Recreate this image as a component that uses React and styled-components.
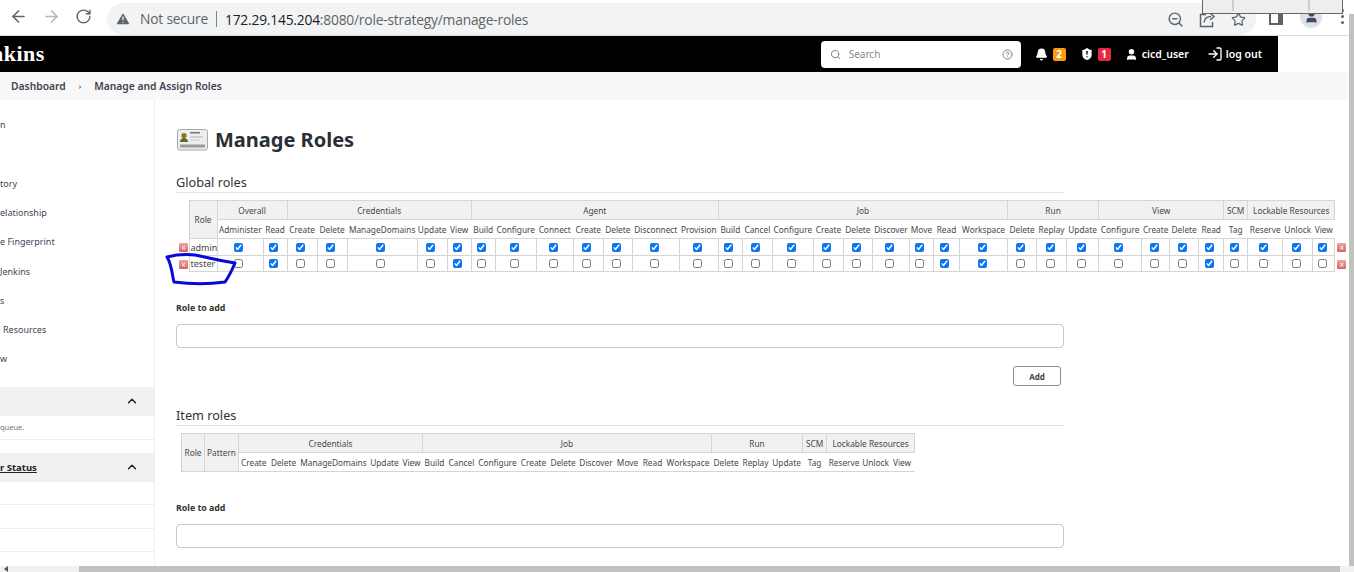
import React from "react";
import styled, { createGlobalStyle } from "styled-components";
import { ArrowLeft, ArrowRight, RotateCw, TriangleAlert, ZoomOut, Star, ChevronUp, Search, CircleHelp, Bell, ShieldAlert, User, LogIn } from "lucide-react";

const GlobalStyle = createGlobalStyle`
  html, body { margin: 0; padding: 0; background: #fff; overflow: hidden; }
  * { box-sizing: border-box; }
  body { font-family: "Noto Sans", "Open Sans", sans-serif; color: #333; }
`;

const Page = styled.div`
  position: relative;
  width: 1354px;
  height: 572px;
  overflow: hidden;
  display: flex;
  flex-direction: column;
`;

/* browser toolbar */
const Toolbar = styled.div`
  height: 36px;
  flex: none;
  display: flex;
  align-items: flex-start;
  background: #fff;
  border-bottom: 1px solid #d9dadc;
`;
const NavIcons = styled.div`
  width: 107px;
  flex: none;
  display: flex;
  gap: 14px;
  padding: 0 0 0 9px;
  height: 33px;
  align-items: center;
  color: #5f6368;
`;
const Pill = styled.div`
  width: 1149px;
  flex: none;
  height: 32px;
  margin-top: 3px;
  border-radius: 16px;
  background: #f1f3f4;
  display: flex;
  align-items: center;
  padding-left: 8px;
  font-family: "Open Sans", sans-serif;
  font-size: 13.8px;
  letter-spacing: -0.2px;
`;
const NotSecure = styled.span`
  color: #5f6368;
  margin-left: 9px;
  padding-right: 8px;
  border-right: 1px solid #80868b;
  line-height: 16px;
`;
const Host = styled.span`
  color: #202124;
  margin-left: 8px;
`;
const Path = styled.span`
  color: #5f6368;
`;
const PillIcons = styled.div`
  margin-left: auto;
  display: flex;
  gap: 15px;
  align-items: center;
  padding-right: 10px;
  color: #5f6368;
`;
const ToolbarRight = styled.div`
  flex: 1;
  display: flex;
  align-items: center;
  height: 33px;
  padding-left: 13px;
  gap: 17px;
`;
const SidePanelIcon = styled.span`
  width: 14px;
  height: 14px;
  border: 2px solid #5f6368;
  border-right-width: 5px;
  margin-top: 3px;
`;
const Avatar = styled.span`
  width: 22px;
  height: 22px;
  border-radius: 50%;
  background: #dfe1e5;
  display: flex;
  align-items: center;
  justify-content: center;
  color: #3c4a62;
`;
const Dots = styled.span`
  display: flex;
  flex-direction: column;
  gap: 3px;
  margin-left: 2px;
  i { width: 3px; height: 3px; border-radius: 50%; background: #5f6368; display: block; }
`;
const Overlay = styled.div`
  position: absolute;
  top: 0;
  left: 1202px;
  width: 141px;
  height: 14px;
  background: #eee;
  border: 1px solid #666;
  border-top: 0;
  display: flex;
  padding-left: 29px;
  gap: 74px;
  i { width: 2px; height: 11px; background: #ccc; display: block; }
`;

/* jenkins header */
const Header = styled.header`
  height: 36px;
  width: 1278px;
  flex: none;
  background: #000;
  color: #fff;
  display: flex;
  align-items: center;
  overflow: hidden;
`;
const Brand = styled.span`
  font-family: "Liberation Serif", serif;
  font-weight: 700;
  font-size: 22px;
  letter-spacing: 0.5px;
  margin-left: -9px;
`;
const SearchBox = styled.div`
  margin-left: auto;
  width: 200px;
  height: 27px;
  border-radius: 4px;
  background: #fff;
  color: #777;
  display: flex;
  align-items: center;
  padding: 0 8px 0 9px;
  font-size: 10px;
  span { margin-left: 8px; flex: 1; color: #888; }
`;
const HeadItem = styled.div`
  display: flex;
  align-items: center;
  gap: ${(p) => p.$inner}px;
  margin-left: ${(p) => p.$gap}px;
  font-size: 10.5px;
  font-weight: 600;
`;
const Badge = styled.span`
  width: 13px;
  height: 13px;
  border-radius: 2px;
  background: ${(p) => p.$bg};
  color: #fff;
  font-size: 10px;
  font-weight: 700;
  line-height: 13px;
  text-align: center;
`;
const HeaderEnd = styled.span`
  width: 16px;
  flex: none;
`;

/* breadcrumb */
const Crumbs = styled.nav`
  height: 28px;
  flex: none;
  background: #f8f8f8;
  display: flex;
  align-items: center;
  padding-left: 11px;
  font-size: 10.3px;
  font-weight: 600;
  color: #3f4450;
  i { font-style: normal; font-size: 7px; margin: 0 13px 0 13px; }
`;

/* body */
const Body = styled.div`
  flex: 1;
  display: flex;
  min-height: 0;
`;
const Side = styled.aside`
  width: 155px;
  flex: none;
  border-right: 1px solid #eee;
  padding-top: 16px;
  overflow: hidden;
  font-size: 9px;
  color: #3d4657;
`;
const SideLink = styled.div`
  height: 29.25px;
  line-height: 18px;
  margin-top: ${(p) => p.$skip || 0}px;
  padding-left: ${(p) => p.$indent || 0}px;
  white-space: pre;
`;
const PanelHead = styled.div`
  height: 29px;
  margin-top: ${(p) => p.$top}px;
  background: #f1f1f1;
  display: flex;
  align-items: center;
  justify-content: space-between;
  padding-right: 15px;
  font-weight: 700;
  font-size: 9.5px;
  color: #222;
  u { text-decoration: underline; }
`;
const PanelNote = styled.div`
  height: 24px;
  border-bottom: 1px solid #eee;
  font-size: 7.5px;
  line-height: 22px;
  color: #777;
`;
const PanelRow = styled.div`
  height: 23.5px;
  border-bottom: 1px solid #eee;
`;

const Main = styled.main`
  flex: 1;
  padding: 29px 0 0 21px;
  min-width: 0;
`;
const TitleRow = styled.div`
  display: flex;
  align-items: center;
  gap: 7px;
  height: 21px;
  margin-left: 1px;
`;
const Title = styled.h1`
  margin: 0;
  font-size: 20px;
  font-weight: 700;
  color: #2a2f36;
  line-height: 21px;
`;
const SectionTitle = styled.h2`
  margin: ${(p) => p.$top}px 0 0;
  width: 888px;
  height: 18px;
  border-bottom: 1px solid #e3e3e3;
  font-size: 12.7px;
  font-weight: 400;
  line-height: 15px;
  color: #333;
`;
const RoleTable = styled.table`
  border-collapse: collapse;
  table-layout: fixed;
  margin: 7px 0 0 ${(p) => p.$left || 0}px;
  font-size: 8.3px;
  color: #484848;
  td, th { padding: 0; text-align: center; font-weight: 400; white-space: nowrap; overflow: hidden; }
`;
const GroupCell = styled.th`
  background: #f1f1f1;
  border: 1px solid #d6d6d0;
  height: 19px;
`;
const SubCell = styled.th`
  height: 19px;
  border-bottom: 1px solid #d6d6d0;
  border-top: 1px solid #d6d6d0;
`;
const BoxCell = styled.td`
  height: ${(p) => p.$h}px;
  border: 1px solid #d6d6d0;
  line-height: 0;
  && { padding-right: 3px; }
`;
const NameCell = styled.td`
  && { text-align: left; padding-left: 1px; }
  border: 1px solid #d6d6d0;
  font-size: 9px;
  height: ${(p) => p.$h}px;
`;
const BareCell = styled.td`
  border: 0;
  line-height: 0;
  && { text-align: left; padding: 1px 0 0 ${(p) => p.$pad || 0}px; }
`;
const Check = styled.input.attrs({ type: "checkbox", readOnly: true })`
  width: 9px;
  height: 9px;
  margin: 0;
  accent-color: #0b76ef;
`;
const Remove = styled.span`
  display: inline-block;
  width: 9px;
  height: 9px;
  border-radius: 1px;
  background: linear-gradient(#eda3a3, #dc6262);
  color: #fff;
  font-size: 8px;
  line-height: 9px;
  text-align: center;
`;
const FieldLabel = styled.div`
  margin-top: ${(p) => p.$top}px;
  height: 12px;
  line-height: 12px;
  font-size: 8.8px;
  font-weight: 700;
  color: #333;
`;
const TextBox = styled.input`
  display: block;
  width: 888px;
  height: 24px;
  margin-top: 10px;
  border: 1px solid #c6ccd2;
  border-radius: 4px;
  background: #fff;
`;
const AddRow = styled.div`
  width: 885px;
  margin-top: 18px;
  display: flex;
  justify-content: flex-end;
`;
const AddButton = styled.button`
  width: 48px;
  height: 20px;
  padding: 0;
  background: #fff;
  border: 1px solid #8d8d8d;
  border-radius: 3px;
  font: 700 8px "Noto Sans", sans-serif;
  color: #444;
`;
const Scribble = styled.svg`
  position: absolute;
  left: 160px;
  top: 250px;
`;
const ScrollX = styled.div`
  position: absolute;
  left: 0;
  right: 0;
  bottom: 0;
  height: 6px;
  background: #f1f1f1;
  padding-left: 79px;
  i { display: block; width: 1261px; height: 6px; background: #c1c1c1; }
`;
const ScrollArrow = styled.b`
  position: absolute;
  left: 4px;
  bottom: 0;
  width: 0;
  height: 0;
  border: 3px solid transparent;
  border-left: 0;
  border-right: 4px solid #555;
`;
const ScrollY = styled.div`
  position: absolute;
  right: 0;
  top: 14px;
  bottom: 6px;
  width: 5px;
  background: #c1c1c1;
`;

const globalGroups = [
  ["Overall", [["Administer", 46], ["Read", 24]]],
  ["Credentials", [["Create", 30], ["Delete", 30], ["ManageDomains", 70], ["Update", 30], ["View", 24]]],
  ["Agent", [["Build", 24], ["Configure", 41], ["Connect", 37], ["Create", 30], ["Delete", 29], ["Disconnect", 47], ["Provision", 39]]],
  ["Job", [["Build", 24], ["Cancel", 30], ["Configure", 41], ["Create", 30], ["Delete", 29], ["Discover", 37], ["Move", 24], ["Read", 26], ["Workspace", 48]]],
  ["Run", [["Delete", 29], ["Replay", 30], ["Update", 32]]],
  ["View", [["Configure", 43], ["Create", 28], ["Delete", 29], ["Read", 25]]],
  ["SCM", [["Tag", 24]]],
  ["Lockable Resources", [["Reserve", 35], ["Unlock", 30], ["View", 22]]],
];

const itemGroups = [
  ["Credentials", [["Create", 30], ["Delete", 30], ["ManageDomains", 70], ["Update", 32], ["View", 22]]],
  ["Job", [["Build", 24], ["Cancel", 30], ["Configure", 42], ["Create", 30], ["Delete", 29], ["Discover", 37], ["Move", 26], ["Read", 24], ["Workspace", 47]]],
  ["Run", [["Delete", 29], ["Replay", 30], ["Update", 32]]],
  ["SCM", [["Tag", 24]]],
  ["Lockable Resources", [["Reserve", 35], ["Unlock", 28], ["View", 25]]],
];

const flat = (groups) => groups.flatMap(([, cols]) => cols);

// ticked columns for the tester role: Overall/Read, Credentials/View, Job/Read, Job/Workspace, View/Read
const testerTicks = [1, 6, 21, 22, 29];

function CardIcon() {
  return (
    <svg width="31" height="22" viewBox="0 0 31 22">
      <rect x="0.5" y="0.5" width="30" height="20.5" rx="2" fill="#eceded" stroke="#aaa" />
      <circle cx="7" cy="6.5" r="2.6" fill="#8a7420" />
      <path d="M3 13c0-3 2-4 4-4s4 1 4 4z" fill="#5d6b1e" />
      <rect x="13" y="3" width="10" height="1.5" fill="#777" />
      <rect x="13" y="7" width="13" height="2" fill="#d0d0d0" />
      <rect x="13" y="10.5" width="10" height="1.5" fill="#d8d8d8" />
      <rect x="3" y="15.5" width="25" height="3" fill="#777" opacity="0.7" />
    </svg>
  );
}

function ShareIcon() {
  return (
    <svg width="17" height="17" viewBox="0 0 17 17" fill="none" stroke="currentColor" strokeWidth="1.5">
      <path d="M7 3.5H1.5v12h12V11" />
      <path d="M5 11.5c.5-4 3-6 7-6M11 2l4 3.5-4 3.5" />
    </svg>
  );
}

function GlobalTable() {
  const cols = flat(globalGroups);
  const rows = [
    { name: "admin", h: 17, ticks: cols.map((_, i) => i) },
    { name: "tester", h: 16, ticks: testerTicks },
  ];
  return (
    <RoleTable style={{ width: 1172 }}>
      <colgroup>
        <col style={{ width: 13 }} />
        <col style={{ width: 28 }} />
        {cols.map(([label, w], i) => <col key={i} style={{ width: w }} />)}
        <col style={{ width: 13 }} />
      </colgroup>
      <thead>
        <tr>
          <BareCell />
          <GroupCell rowSpan={2}>Role</GroupCell>
          {globalGroups.map(([name, sub]) => <GroupCell key={name} colSpan={sub.length}>{name}</GroupCell>)}
          <BareCell />
        </tr>
        <tr>
          <BareCell />
          {cols.map(([label], i) => <SubCell key={i}>{label}</SubCell>)}
          <BareCell />
        </tr>
      </thead>
      <tbody>
        {rows.map((row) => (
          <tr key={row.name}>
            <BareCell $pad={3}><Remove>×</Remove></BareCell>
            <NameCell $h={row.h}>{row.name}</NameCell>
            {cols.map((_, i) => (
              <BoxCell key={i} $h={row.h}><Check defaultChecked={row.ticks.includes(i)} /></BoxCell>
            ))}
            <BareCell $pad={2}><Remove>×</Remove></BareCell>
          </tr>
        ))}
      </tbody>
    </RoleTable>
  );
}

function ItemTable() {
  const cols = flat(itemGroups);
  return (
    <RoleTable $left={5} style={{ width: 734 }}>
      <colgroup>
        <col style={{ width: 23 }} />
        <col style={{ width: 34 }} />
        {cols.map(([label, w], i) => <col key={i} style={{ width: w }} />)}
      </colgroup>
      <thead>
        <tr>
          <GroupCell rowSpan={2}>Role</GroupCell>
          <GroupCell rowSpan={2}>Pattern</GroupCell>
          {itemGroups.map(([name, sub]) => <GroupCell key={name} colSpan={sub.length}>{name}</GroupCell>)}
        </tr>
        <tr>
          {cols.map(([label], i) => <SubCell key={i}>{label}</SubCell>)}
        </tr>
      </thead>
    </RoleTable>
  );
}

export default function App() {
  return (
    <Page>
      <GlobalStyle />
      <Toolbar>
        <NavIcons>
          <ArrowLeft size={19} />
          <ArrowRight size={19} color="#b4b7bb" />
          <RotateCw size={17} />
        </NavIcons>
        <Pill>
          <TriangleAlert size={16} fill="#5f6368" stroke="#f1f3f4" />
          <NotSecure>Not secure</NotSecure>
          <Host>172.29.145.204</Host>
          <Path>:8080/role-strategy/manage-roles</Path>
          <PillIcons>
            <ZoomOut size={17} />
            <ShareIcon />
            <Star size={15} />
          </PillIcons>
        </Pill>
        <ToolbarRight>
          <SidePanelIcon />
          <Avatar><User size={15} fill="#3c4a62" /></Avatar>
          <Dots><i /><i /><i /></Dots>
        </ToolbarRight>
      </Toolbar>
      <Overlay><i /><i /></Overlay>

      <Header>
        <Brand>nkins</Brand>
        <SearchBox>
          <Search size={11} />
          <span>Search</span>
          <CircleHelp size={11} />
        </SearchBox>
        <HeadItem $gap={14} $inner={5}><Bell size={13} fill="#fff" /><Badge $bg="#fe9a07">2</Badge></HeadItem>
        <HeadItem $gap={13} $inner={3}><ShieldAlert size={16} fill="#fff" stroke="#000" /><Badge $bg="#e6293f">1</Badge></HeadItem>
        <HeadItem $gap={14} $inner={4}><User size={13} fill="#fff" />cicd_user</HeadItem>
        <HeadItem $gap={18} $inner={3}><LogIn size={16} />log out</HeadItem>
        <HeaderEnd />
      </Header>

      <Crumbs>Dashboard<i>›</i>Manage and Assign Roles</Crumbs>

      <Body>
        <Side>
          <SideLink>n</SideLink>
          <SideLink $skip={29.5}>tory</SideLink>
          <SideLink>elationship</SideLink>
          <SideLink>e Fingerprint</SideLink>
          <SideLink>Jenkins</SideLink>
          <SideLink>s</SideLink>
          <SideLink $indent={3}>Resources</SideLink>
          <SideLink>w</SideLink>
          <PanelHead $top={7}><span /><ChevronUp size={14} strokeWidth={2.5} /></PanelHead>
          <PanelNote>queue.</PanelNote>
          <PanelHead $top={13}><u>r Status</u><ChevronUp size={14} strokeWidth={2.5} /></PanelHead>
          <PanelRow />
          <PanelRow />
          <PanelRow />
        </Side>
        <Main>
          <TitleRow><CardIcon /><Title>Manage Roles</Title></TitleRow>
          <SectionTitle $top={25}>Global roles</SectionTitle>
          <GlobalTable />
          <FieldLabel $top={30}>Role to add</FieldLabel>
          <TextBox />
          <AddRow><AddButton>Add</AddButton></AddRow>
          <SectionTitle $top={22}>Item roles</SectionTitle>
          <ItemTable />
          <FieldLabel $top={30}>Role to add</FieldLabel>
          <TextBox />
        </Main>
      </Body>

      <Scribble width="90" height="45" viewBox="0 0 90 45">
        <path d="M7 7 C15 5 25 4 35 5 C45 7 55 10 75 13 C72 20 68 28 65 32 C50 34 30 34 14 32 C12 25 12 15 7 7 Z" fill="none" stroke="#0808dc" strokeWidth="3" strokeLinejoin="round" />
      </Scribble>
      <ScrollY />
      <ScrollX><ScrollArrow /><i /></ScrollX>
    </Page>
  );
}
